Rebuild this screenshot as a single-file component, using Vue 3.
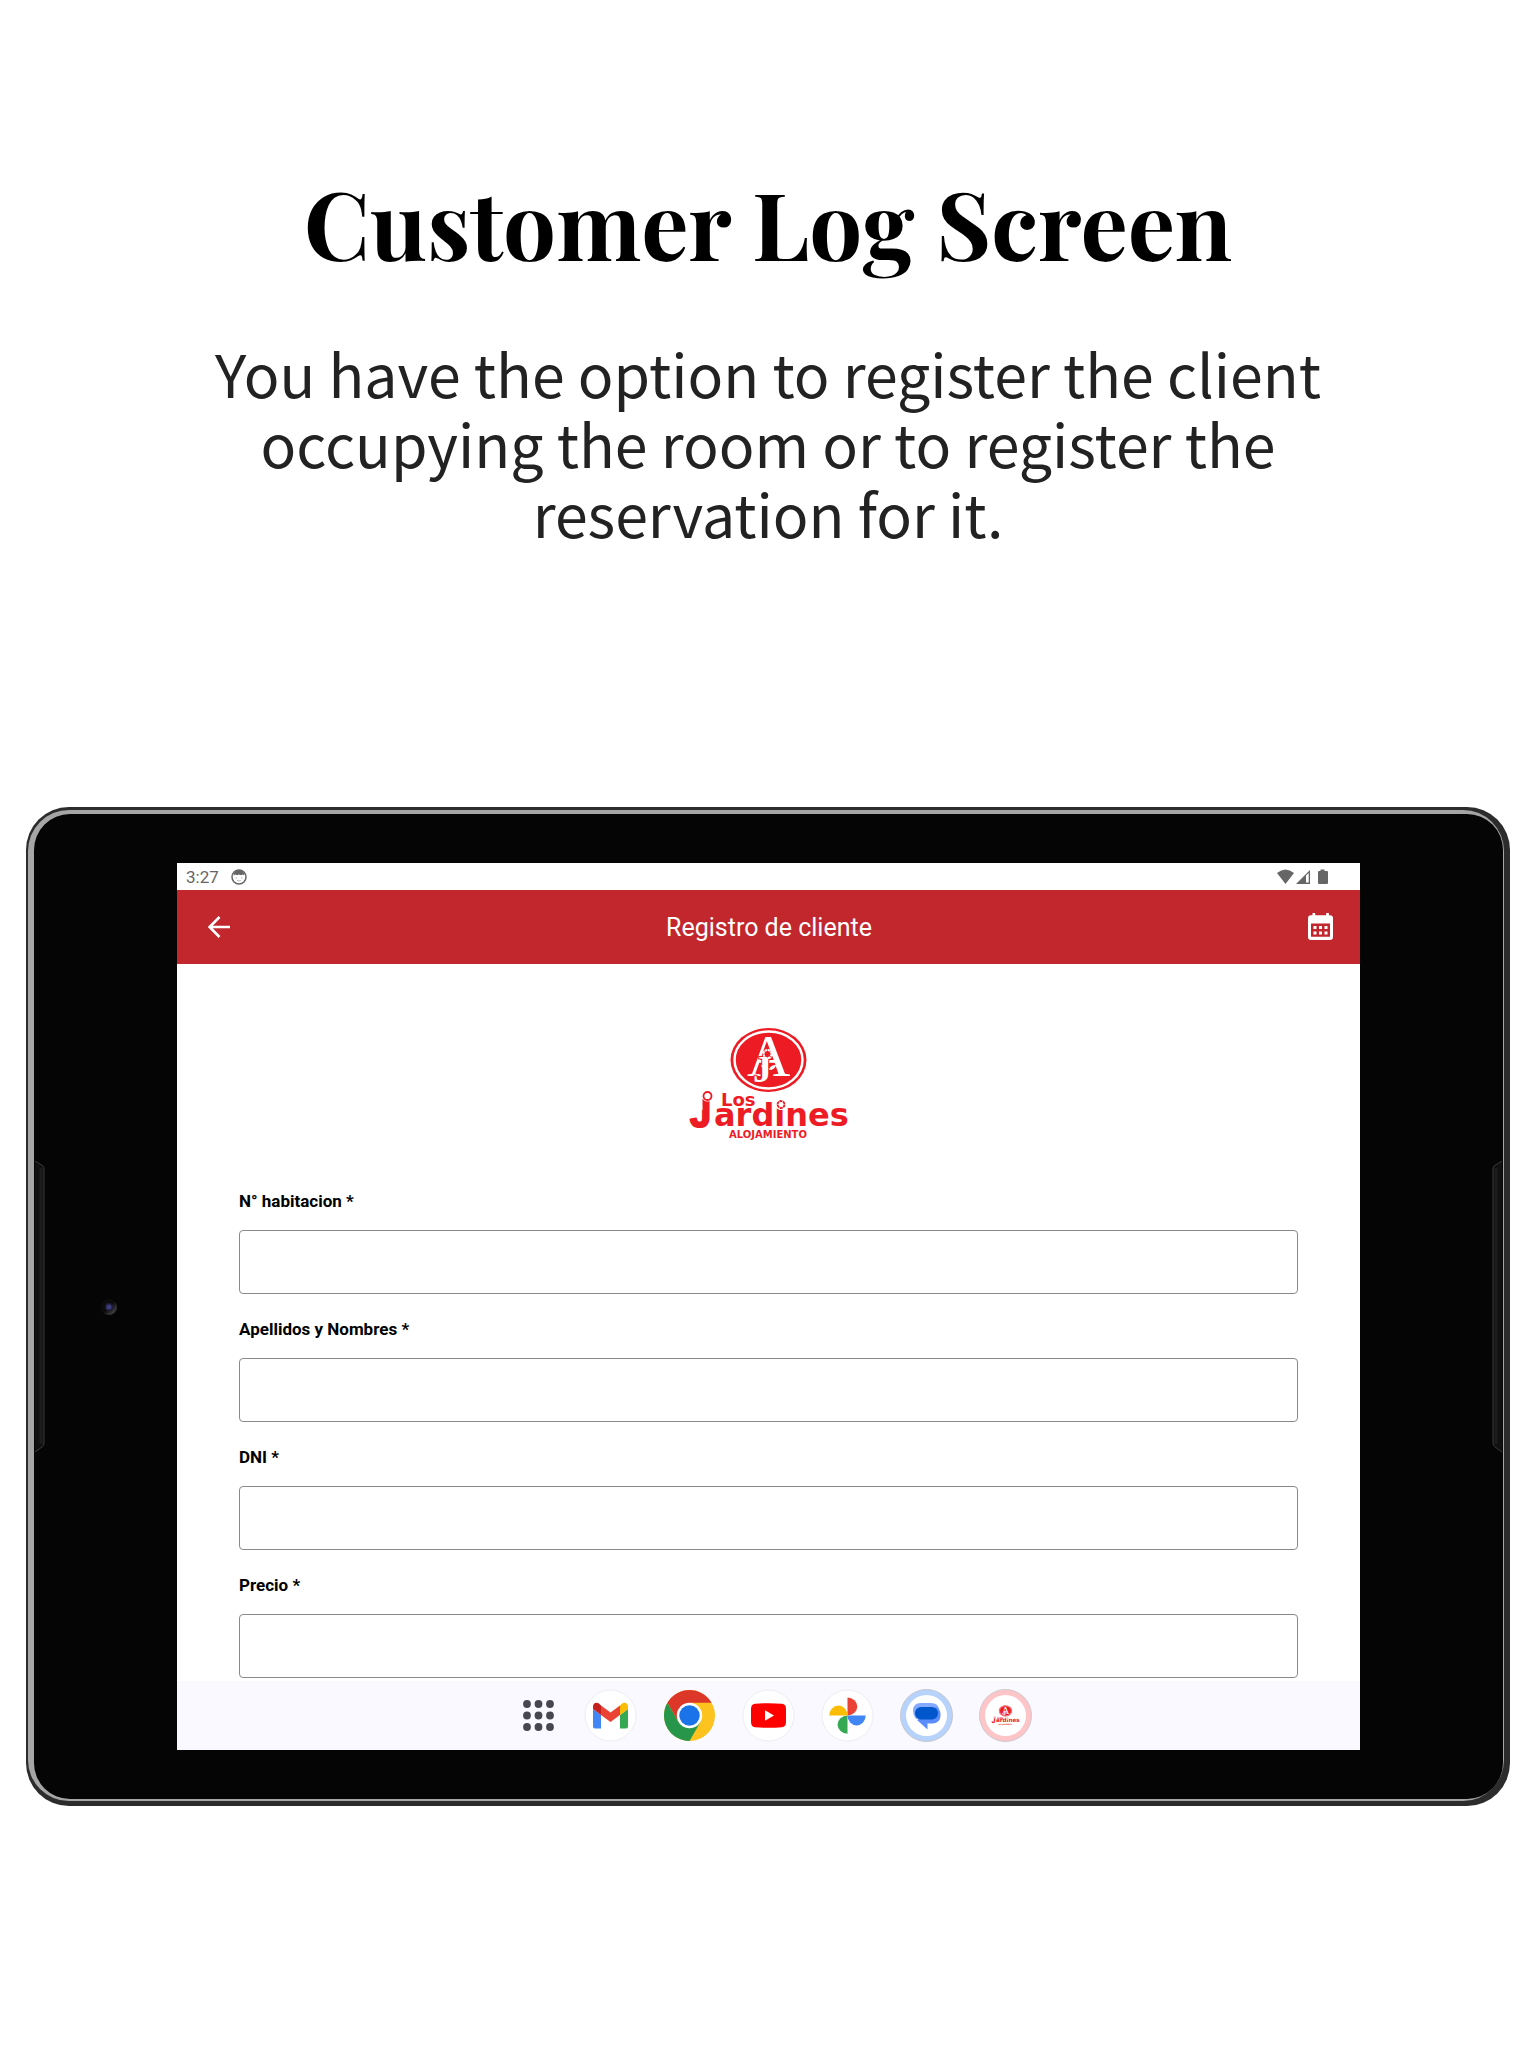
<script setup>
import { reactive } from 'vue'

const fields = reactive([
  { id: 'habitacion', label: 'N° habitacion *', value: '' },
  { id: 'nombres', label: 'Apellidos y Nombres *', value: '' },
  { id: 'dni', label: 'DNI *', value: '' },
  { id: 'precio', label: 'Precio *', value: '' },
])
</script>

<template>
  <main class="page">
    <header class="intro">
      <h1>Customer Log Screen</h1>
      <p>You have the option to register the client occupying the room or to register the reservation for it.</p>
    </header>

    <section class="frame">
      <div class="rim">
        <div class="bezel">
          <div class="side">
            <svg class="key" viewBox="0 0 11 293" aria-hidden="true">
              <path d="M1 0V1L9 6Q10 7 10 9V283Q10 286 8 287L1 292Z" fill="#101010" />
              <path d="M7 8V284" stroke="#1d1d1d" stroke-width="3" />
              <path d="M1 1L9 6Q10 7 10 9V283Q10 286 8 287L1 292" fill="none" stroke="#3a3a3a" />
            </svg>
            <svg class="camera" viewBox="0 0 18 18" aria-hidden="true">
              <defs>
                <linearGradient id="lens" x1="0" y1="0" x2="1" y2="1">
                  <stop offset=".5" stop-color="#0b0b0c" />
                  <stop offset=".8" stop-color="#3b3b3b" />
                  <stop offset="1" stop-color="#111" />
                </linearGradient>
              </defs>
              <circle cx="9" cy="9" r="8" fill="url(#lens)" />
              <circle cx="9" cy="9" r="4" fill="#1c1c38" />
              <circle cx="9" cy="9" r="2.500" fill="#3d3d80" />
            </svg>
          </div>

          <div class="screen">
            <div class="status">
              <div class="status-left">
                <span>3:27</span>
                <svg width="16" height="16" viewBox="0 0 16 16" aria-hidden="true">
                  <circle cx="8" cy="8" r="7" fill="none" stroke="#666" stroke-width="1.500" />
                  <path d="M2.500 6.500Q3 1 8 1T13.500 6.500L11.500 5.500L10 6.200L8 5.500L6 6.200L4.500 5.500Z" fill="#666" />
                  <path d="M4.500 9H6M10 9h1.500M6 11.500Q8 12.500 10 11.500" fill="none" stroke="#999" stroke-width=".7" />
                </svg>
              </div>
              <svg width="51" height="16" viewBox="0 0 51 16" fill="#666" aria-hidden="true">
                <path d="M0 4Q8.500 -3 17 4L8.500 15Z" />
                <path d="M19 15L33 1V15Z" />
                <path d="M29 6.500L31.700 4V13.500H29Z" fill="#fff" />
                <path d="M43.500 0.500h4V2H50q1 0 1 1V14q0 1-1 1H42q-1 0-1-1V3q0-1 1-1h1.500Z" />
              </svg>
            </div>

            <div class="bar">
              <button type="button" aria-label="Volver">
                <svg width="22" height="22" viewBox="0 0 22 22" aria-hidden="true">
                  <path d="M22 11H2M11.500 1L1.600 11L11.500 21" fill="none" stroke="#fff" stroke-width="2.600" />
                </svg>
              </button>
              <h2>Registro de cliente</h2>
              <button type="button" aria-label="Calendario">
                <svg width="26" height="28" viewBox="0 0 26 28" aria-hidden="true">
                  <path fill="#fff" fill-rule="evenodd" d="M4.500 0h2.700v2.300h11V0h2.700v2.300H22q3 0 3 3V24q0 3-3 3H3q-3 0-3-3V5.300q0-3 3-3h1.500ZM3 10.500V23.700H22V10.500Z" />
                  <path fill="#fff" d="M5.500 13h3v3h-3ZM11 13h3v3h-3ZM16.500 13h3v3h-3ZM5.500 18.500h3v3h-3ZM11 18.500h3v3h-3ZM16.500 18.500h3v3h-3Z" />
                </svg>
              </button>
            </div>

            <form class="form" @submit.prevent>
              <svg class="brand" viewBox="0 0 165 115" role="img" aria-label="Los Jardines Alojamiento">
                <defs>
                  <g id="brand" fill="#ed1c24">
                    <ellipse cx="82.500" cy="34" rx="38" ry="32" />
                    <ellipse cx="82.500" cy="34" rx="34" ry="28.500" fill="none" stroke="#fff" stroke-width="2.500" />
                    <g fill="#fff" font-family="'Liberation Serif', serif">
                      <text x="61" y="50" font-size="60">A</text>
                      <text x="67" y="56" font-size="38" font-weight="700" stroke="#ed1c24" stroke-width="2" paint-order="stroke">J</text>
                      <path d="M82 44Q76 44 75 39Q81 39 82 44ZM83 44Q89 44 90 39Q84 39 83 44Z" />
                    </g>
                    <circle cx="81.500" cy="28" r="4" stroke="#fff" stroke-width="2" stroke-dasharray="2.500 .6" />
                    <g font-family="'DejaVu Sans', sans-serif" font-weight="700">
                      <text x="35" y="80" font-size="18">Los</text>
                      <text x="4" y="101" font-size="38" font-family="'Liberation Sans', sans-serif" stroke="#ed1c24" stroke-width="2" stroke-linejoin="round">J</text>
                      <text x="28" y="100" font-size="32">ardines</text>
                      <text x="82" y="112" text-anchor="middle" font-size="10">ALOJAMIENTO</text>
                    </g>
                    <path d="M4 70H16.500V84H4Z" fill="#fff" />
                    <circle cx="21.500" cy="70" r="5.500" fill="#fff" />
                    <circle cx="21.500" cy="70" r="4" fill="#fff" stroke="#ed1c24" stroke-width="1.800" />
                    <circle cx="95" cy="78.500" r="5.500" fill="#fff" />
                    <circle cx="95" cy="78.500" r="3.500" fill="#fff" stroke="#ed1c24" stroke-width="1.800" stroke-dasharray="3 .6" />
                  </g>
                </defs>
                <use href="#brand" />
              </svg>

              <div v-for="field in fields" :key="field.id" class="field">
                <label :for="field.id">{{ field.label }}</label>
                <input :id="field.id" v-model="field.value" type="text" />
              </div>
            </form>

            <nav class="dock">
              <button type="button" class="apps" aria-label="Apps">
                <svg width="31" height="31" viewBox="0 0 31 31" fill="#474750" aria-hidden="true">
                  <template v-for="row in 3" :key="row">
                    <circle v-for="col in 3" :key="col" :cx="col * 11.5 - 7.5" :cy="row * 11.5 - 7.5" r="3.900" />
                  </template>
                </svg>
              </button>
              <button type="button" aria-label="Gmail">
                <svg viewBox="0 0 53 53" aria-hidden="true">
                  <circle cx="26.500" cy="26.500" r="25.500" fill="#fff" stroke="#ededf2" />
                  <path d="M9 20L17 26V39.500H11Q9 39.500 9 37.500Z" fill="#4285f4" />
                  <path d="M36 26L44 20V37.500Q44 39.500 42 39.500H36Z" fill="#34a853" />
                  <path d="M17 16.500L26.500 23.500L36 16.500V26L26.500 33L17 26Z" fill="#ea4335" />
                  <path d="M9 21V17.500C9 13.500 13 12.500 15.500 15L17 16.500V26L9 20Z" fill="#c5221f" />
                  <path d="M44 21V17.500C44 13.500 40 12.500 37.500 15L36 16.500V26L44 20Z" fill="#fbbc04" />
                </svg>
              </button>
              <button type="button" aria-label="Chrome">
                <svg viewBox="0 0 53 53" aria-hidden="true">
                  <circle cx="26.500" cy="26.500" r="25.500" fill="#fcc31e" />
                  <path d="M4.400 13.750A25.500 25.500 0 0 1 48.600 13.750H26.500L15.500 32.900Z" fill="#dc3729" />
                  <path d="M4.400 13.750A25.500 25.500 0 0 0 26.500 52L37.500 32.900H15.500Z" fill="#27964a" />
                  <circle cx="26.500" cy="26.500" r="12.700" fill="#fff" />
                  <circle cx="26.500" cy="26.500" r="10.200" fill="#1a73e8" />
                </svg>
              </button>
              <button type="button" aria-label="YouTube">
                <svg viewBox="0 0 53 53" aria-hidden="true">
                  <circle cx="26.500" cy="26.500" r="25.500" fill="#fff" stroke="#ededf2" />
                  <path d="M13 14.700Q26.500 13.700 40 14.700Q44 15 44 20V33Q44 38 40 38.300Q26.500 39.300 13 38.300Q9 38 9 33V20Q9 15 13 14.700Z" fill="#f00" />
                  <path d="M23 21.300V31.700L32 26.500Z" fill="#fff" />
                </svg>
              </button>
              <button type="button" aria-label="Fotos">
                <svg viewBox="0 0 53 53" aria-hidden="true">
                  <circle cx="26.500" cy="26.500" r="25.500" fill="#fff" stroke="#ededf2" />
                  <path d="M26.500 26.500V8.500A9.800 9 0 0 1 26.500 26.500Z" fill="#ea4335" />
                  <path d="M26.500 26.500H44.700A9 9.800 0 0 1 26.500 26.500Z" fill="#4285f4" />
                  <path d="M26.500 26.500V44.700A9.800 9 0 0 1 26.500 26.500Z" fill="#34a853" />
                  <path d="M26.500 26.500H8.300A9 9.800 0 0 1 26.500 26.500Z" fill="#fbbc04" />
                </svg>
              </button>
              <button type="button" aria-label="Mensajes">
                <svg viewBox="0 0 53 53" aria-hidden="true">
                  <circle cx="26.500" cy="26.500" r="26" fill="#b7d3fc" stroke="#c3c6cf" />
                  <circle cx="26.500" cy="26.500" r="20.500" fill="#fff" />
                  <path d="M21 14H31Q38 14 39 20V26L16 30Q13 26 13 22Q13 14 21 14Z" fill="#83aaff" />
                  <path d="M36 18Q41 20 40.500 27Q40 34 33 34.500H27.500V40.500L17 31Z" fill="#5c8dff" />
                  <rect x="15" y="18" width="23" height="12.500" rx="6.200" fill="#0057cc" />
                </svg>
              </button>
              <button type="button" aria-label="Los Jardines">
                <svg viewBox="0 0 53 53" aria-hidden="true">
                  <circle cx="26.500" cy="26.500" r="26" fill="#fdc5c8" stroke="#cfc8cc" />
                  <circle cx="26.500" cy="26.500" r="20.500" fill="#fff" />
                  <svg x="12" y="15" width="29" height="22" viewBox="0 0 165 115"><use href="#brand" /></svg>
                </svg>
              </button>
            </nav>
          </div>
          <div class="side right">
            <svg class="key" viewBox="0 0 11 293" aria-hidden="true">
              <path d="M10 0V1L2 6Q1 7 1 9V283Q1 286 3 287L10 292Z" fill="#101010" />
              <path d="M4 8V284" stroke="#1d1d1d" stroke-width="3" />
              <path d="M10 1L2 6Q1 7 1 9V283Q1 286 3 287L10 292" fill="none" stroke="#3a3a3a" />
            </svg>
          </div>
        </div>
      </div>
    </section>
  </main>
</template>

<style>
body {
  margin: 0;
  background: #fff;
}
</style>

<style scoped>
* {
  box-sizing: border-box;
}
.page {
  padding: 162px 26px 242px;
}
.intro {
  max-width: 1200px;
  margin: 0 auto 259px;
  text-align: center;
}
h1 {
  margin: 0 0 56px;
  font: 700 94px/120px 'Playfair Display', 'Liberation Serif', serif;
  color: #000;
}
p {
  margin: 0;
  font: 400 59px/70px 'Noto Sans CJK SC', sans-serif;
  color: #222;
}
.frame {
  padding: 3px 6px 5px 2px;
  border-radius: 43px;
  background: #2c2c2c;
}
.rim {
  padding: 4px 1px 2px 6px;
  border-radius: 41px;
  background: #a6a6a6;
}
.bezel {
  display: grid;
  grid-template-columns: 143px 1fr 143px;
  padding: 49px 0;
  border-radius: 36px;
  background: #050505;
}
.side {
  display: flex;
  align-items: center;
}
.right {
  justify-content: flex-end;
}
.key {
  width: 11px;
  height: 293px;
}
.camera {
  width: 18px;
  height: 18px;
  margin-left: 55px;
}
.screen {
  min-width: 0;
  background: #fff;
  font-family: Roboto, sans-serif;
}
.status {
  display: flex;
  align-items: center;
  justify-content: space-between;
  height: 27px;
  padding: 0 32px 0 9px;
  font-size: 17px;
  color: #666;
}
.status-left {
  display: flex;
  align-items: center;
  gap: 12px;
}
.bar {
  display: flex;
  align-items: center;
  justify-content: space-between;
  height: 74px;
  padding: 0 26px 0 31px;
  background: #c1272d;
  color: #fff;
}
h2 {
  margin: 0;
  font-size: 25px;
  font-weight: 400;
}
button {
  display: flex;
  align-items: center;
  justify-content: center;
  padding: 0;
  border: 0;
  background: none;
}
.form {
  display: flex;
  flex-direction: column;
  gap: 25px;
  padding: 62px 62px 3px;
}
.brand {
  width: 165px;
  height: 115px;
  margin: 0 auto 25px;
}
.field {
  display: flex;
  flex-direction: column;
  gap: 19px;
}
label {
  font-size: 17px;
  font-weight: 700;
  line-height: 20px;
  color: #000;
}
input {
  width: 100%;
  height: 64px;
  padding: 0 16px;
  border: 1px solid #8a8a8a;
  border-radius: 4px;
  background: #fff;
  font: 400 18px Roboto, sans-serif;
}
.dock {
  display: flex;
  align-items: center;
  justify-content: center;
  gap: 26px;
  height: 69px;
  padding-left: 13px;
  background: #f9f9ff;
}
.dock button {
  width: 53px;
  height: 53px;
}
.dock .apps {
  width: 39px;
}
</style>
